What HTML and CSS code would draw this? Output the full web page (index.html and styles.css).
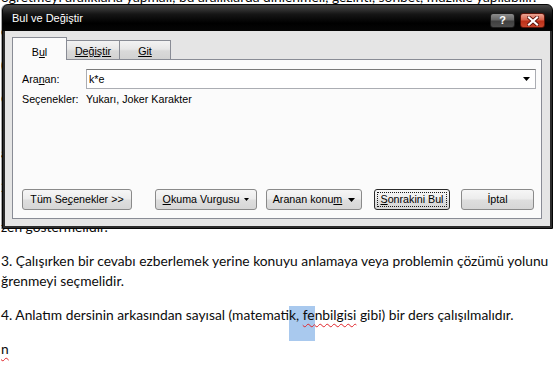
FILE: index.html
```html
<!DOCTYPE html>
<html lang="tr">
<head>
<meta charset="utf-8">
<title>Bul ve Değiştir</title>
<link rel="stylesheet" href="styles.css">
</head>
<body>
<div class="doc">
  <p class="para">öğretmeyi aralıklarla yapmalı, bu aralıklarda dinlenmeli, gezinti, sohbet, müzikle yapılabilir.</p>
  <p class="para">e) Ders çalışmaya başlamadan önce çalışma ortamı hazırlanmalıdır.</p>
  <p class="para">(Çalışma masası düzenli olmalı.)</p>
  <p class="para">Gerekli araç gereçler önceden hazırlanmalıdır.</p>
  <p class="para">1. Ders çalışırken önce konunun genel hatları gözden geçirilmeli, daha sonra<br>ayrıntılara geçilmelidir.</p>
  <p class="para">2. Öğrenci, çalıştığı konuları kendi cümleleriyle anlatabilmeli ve öğrendiklerini<br>1. örneklerle açıklayabilmelidir. Öğretmenler de öğrencileri bu konuda<br>zen göstermelidir.</p>
  <p class="para">3. Çalışırken bir cevabı ezberlemek yerine konuyu anlamaya veya problemin çözümü yolunu<br>ğrenmeyi seçmelidir.</p>
  <p class="para">4. Anlatım dersinin arkasından sayısal (matemati<span class="sel">k, </span><span class="typo"><span class="sel">fe</span>nbilgisi</span> gibi) bir ders çalışılmalıdır.</p>
  <p class="para"><span class="typo">n</span></p>
</div>

<div class="dialog">
  <div class="titlebar">
    <span class="title">Bul ve Değiştir</span>
    <div class="caption-btns">
      <span class="cbtn help">?</span>
      <span class="cbtn close">
        <svg width="12" height="10" viewBox="0 0 12 10"><path d="M2 1.5 L10 8.5 M10 1.5 L2 8.5" stroke="#5a1008" stroke-width="3.8" stroke-linecap="square"/><path d="M2 1.5 L10 8.5 M10 1.5 L2 8.5" stroke="#fff" stroke-width="2.2" stroke-linecap="square"/></svg>
      </span>
    </div>
  </div>
  <div class="client">
    <div class="tabs">
      <div class="tab active">B<u>u</u>l</div>
      <div class="tab t-replace"><u>Değiştir</u></div>
      <div class="tab t-goto"><u>Git</u></div>
    </div>
    <div class="panel">
      <div class="row">
        <span class="lbl">Ara<u>n</u>an:</span>
        <div class="combo">
          <span class="combo-text">k*e</span>
          <svg class="combo-arrow" width="7" height="4" viewBox="0 0 7 4"><path d="M0 0 H7 L3.5 4 Z" fill="#000"/></svg>
        </div>
      </div>
      <div class="row opts">
        <span class="lbl">Seçenekler:</span>
        <span>Yukarı, Joker Karakter</span>
      </div>
      <div class="buttons">
        <span class="btn b-all">Tüm Se<u>ç</u>enekler &gt;&gt;</span>
        <span class="btn b-read"><u>O</u>kuma Vurgusu<svg class="tri-s" width="5" height="3" viewBox="0 0 5 3"><path d="M0 0 H5 L2.5 3 Z" fill="#000"/></svg></span>
        <span class="btn b-where">Aranan konu<u>m</u><svg class="tri-l" width="7" height="4" viewBox="0 0 7 4"><path d="M0 0 H7 L3.5 4 Z" fill="#000"/></svg></span>
        <span class="btn b-next default"><span class="focus"><u>S</u>onrakini Bul</span></span>
        <span class="btn b-cancel">İptal</span>
      </div>
    </div>
  </div>
</div>
</body>
</html>
```

FILE: styles.css
```css
* { box-sizing: border-box; }

html, body {
  margin: 0;
  padding: 0;
}

body {
  width: 554px;
  height: 371px;
  overflow: hidden;
  background: #ffffff;
  position: relative;
}

/* ---------- Word document behind ---------- */
.doc {
  display: flow-root;
  padding-left: 1px;
  font-family: Lato, "Open Sans", sans-serif;
  font-size: 13.8px;
  line-height: 20px;
  color: #0c0c0c;
}

.para {
  margin: 0 0 14px;
  white-space: nowrap;
}

.para:first-child {
  margin-top: -13px;
}

.sel {
  background: #a9c9ee;
  padding: 0 0 18px;
}

.typo {
  text-decoration: underline wavy #e0242a;
  text-decoration-thickness: 1px;
  text-underline-offset: 3px;
}

/* ---------- Dialog ---------- */
.dialog {
  position: absolute;
  left: 2px;
  top: 4px;
  width: 551px;
  height: 225px;
  border: 1px solid #050505;
  border-radius: 6px 6px 0 0;
  background: linear-gradient(#4a4a4a 0, #161616 9px, #000 18px, #050505 26px, #2c2c2c 26px);
  display: flex;
  flex-direction: column;
  font-family: "Liberation Sans", Arial, sans-serif;
  font-size: 10.7px;
  color: #000;
  box-shadow: -1px 0 0 rgba(0,0,0,0.35);
}

.titlebar {
  height: 26px;
  display: flex;
  align-items: flex-start;
  justify-content: space-between;
  padding: 0 7px 0 9px;
}

.title {
  color: #ffffff;
  font-size: 11px;
  line-height: 14px;
  margin-top: 6px;
}

.caption-btns {
  display: flex;
  gap: 5px;
  margin-top: 8px;
}

.cbtn {
  width: 25px;
  height: 15px;
  border-radius: 3px;
  display: flex;
  align-items: center;
  justify-content: center;
}

.help {
  border: 1px solid #1c1c1c;
  background: linear-gradient(#8c8c8c, #676767 45%, #3f3f3f 55%, #4d4d4d);
  color: #fff;
  font-weight: bold;
  font-size: 11px;
  line-height: 13px;
}

.close {
  border: 1px solid #5d1409;
  background: linear-gradient(#eba493, #d8634c 45%, #bb3019 55%, #c9472d);
}

.client {
  flex: 1;
  margin: 0 2px 2px;
  background: #e5e5e5;
  padding: 6px 8px 7px 7px;
  display: flex;
  flex-direction: column;
}

.tabs {
  display: flex;
  align-items: flex-end;
  height: 23px;
  margin-bottom: -1px;
  position: relative;
  z-index: 1;
}

.tab {
  height: 19px;
  margin-bottom: 1px;
  border: 1px solid #898c95;
  border-left: none;
  border-bottom: none;
  background: linear-gradient(#f3f3f3, #e7e7e7 45%, #d9d9d9 55%, #d2d2d2);
  text-align: center;
  line-height: 14px;
  padding-top: 3px;
}

.tab.active {
  width: 55px;
  height: 23px;
  margin-bottom: 0;
  border-left: 1px solid #898c95;
  background: #fbfbfb;
  padding-top: 7px;
}

.t-replace { width: 53px; }
.t-goto { width: 51px; }

.panel {
  flex: 1;
  border: 1px solid #898c95;
  background: #fbfbfb;
  padding: 9px 5px 8px 9px;
  display: flex;
  flex-direction: column;
}

.row {
  display: flex;
  align-items: center;
  height: 20px;
}

.row.opts {
  height: 14px;
  margin-top: 3px;
  line-height: 14px;
}

.lbl {
  width: 64px;
  flex: none;
}

.combo {
  flex: 1;
  height: 20px;
  border: 1px solid #abadb3;
  border-top-color: #7a7a7a;
  background: #ffffff;
  display: flex;
  align-items: center;
  justify-content: space-between;
  padding: 0 5px 0 2px;
}

.buttons {
  margin-top: auto;
  display: flex;
}

.btn {
  height: 21px;
  border: 1px solid #8a8a8a;
  border-radius: 3px;
  background: linear-gradient(#f6f6f6, #ececec 48%, #dedede 52%, #d6d6d6);
  display: flex;
  align-items: center;
  justify-content: center;
  line-height: 13px;
  white-space: nowrap;
}

.b-all { width: 110px; margin-right: 23px; }
.b-read { width: 102px; margin-right: 9px; }
.b-where { width: 96px; margin-right: 12px; }
.b-next { width: 76px; margin-right: 11px; }
.b-cancel { width: 73px; }

.tri-s { margin-left: 5px; }
.tri-l { margin-left: 6px; }

.btn.default {
  border-color: #2a2a2a;
  padding: 2px;
  align-items: stretch;
}

.focus {
  flex: 1;
  border: 1px dotted #1a1a1a;
  display: flex;
  align-items: center;
  justify-content: center;
}
```
